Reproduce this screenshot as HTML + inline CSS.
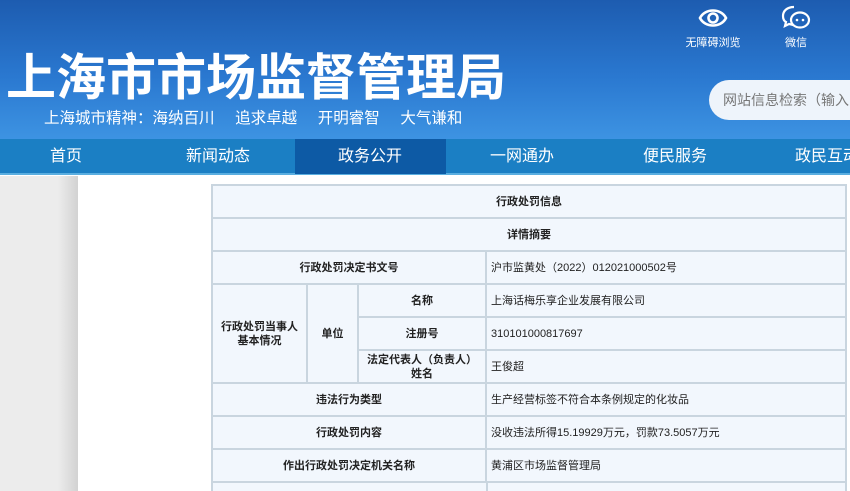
<!DOCTYPE html>
<html><head><meta charset="utf-8"><style>
*{margin:0;padding:0;box-sizing:border-box}
html,body{width:850px;height:491px;overflow:hidden}
body{background:#fff;font-family:"Liberation Sans","Noto Sans CJK SC",sans-serif;position:relative}
.hd{position:absolute;left:0;top:0;width:850px;height:139px;background:linear-gradient(180deg,#1d5cb0 0%,#2a78d0 55%,#3d93e2 100%)}
.title{position:absolute;left:6px;top:44px;font-size:50px;font-weight:bold;color:#fff;font-family:"Noto Sans CJK SC",sans-serif;line-height:60px;white-space:nowrap}
.motto{position:absolute;left:44px;top:108px;font-size:15.5px;color:#fff;line-height:22px;white-space:pre;word-spacing:6px}
.ic{position:absolute;color:#fff;font-size:11px;text-align:center;line-height:14px}
.search{position:absolute;left:709px;top:80px;width:141px;height:40px;border-radius:20px 0 0 20px;background:#eef4fb;color:#777;font-size:14px;line-height:40px;padding-left:14px;white-space:nowrap;overflow:hidden}
.nav{position:absolute;left:0;top:139px;width:850px;height:36px;background:#1b7fc4;border-bottom:2px solid #5aaee0;overflow:hidden}
.nav span{position:absolute;top:0;line-height:36px;color:#fff;font-size:16px;white-space:nowrap}
.act{position:absolute;left:295px;top:139px;width:151px;height:35px;background:#0d5aa5}
.lg{position:absolute;left:0;top:176px;width:78px;height:315px;background:linear-gradient(90deg,#ececec 0,#ececec 58px,#d2d2d2 78px)}
.wrap{position:absolute;left:211px;top:184px;width:636px;height:307px;overflow:hidden}
table{width:636px;border-collapse:collapse;font-size:11px;color:#222}
td{border:2px solid #c9d5df;background:#f2f7fd;height:33px;padding:0;text-align:center;line-height:14px}
td.v{text-align:left;padding-left:4px}
.last{position:absolute;left:0;top:299px;width:636px;height:8px;background:#f2f7fd;border-left:2px solid #c9d5df;border-right:2px solid #c9d5df}
.last i{position:absolute;left:273px;top:0;width:2px;height:8px;background:#c9d5df}
</style></head><body>
<div class="hd"></div>
<div class="title">上海市市场监督管理局</div>
<div class="motto">上海城市精神：海纳百川  追求卓越  开明睿智  大气谦和</div>
<div class="ic" style="left:680px;top:4px;width:66px">
<svg width="32" height="28" viewBox="0 0 32 28"><path d="M3 14C8 4 24 4 29 14C24 24 8 24 3 14Z" fill="none" stroke="#fff" stroke-width="2.6"/><circle cx="16" cy="14" r="4.5" fill="none" stroke="#fff" stroke-width="2.6"/></svg><br>无障碍浏览</div>
<div class="ic" style="left:776px;top:4px;width:40px">
<svg width="32" height="28" viewBox="0 0 32 28"><path d="M14 3C7 3 3 7 3 12c0 3 1 5 3 6l-1 4 4-2c1 0 3 1 4 1" fill="none" stroke="#fff" stroke-width="2.2"/><ellipse cx="20" cy="16" rx="9" ry="7.5" fill="none" stroke="#fff" stroke-width="2.2"/><circle cx="17" cy="16" r="1.3" fill="#fff"/><circle cx="23" cy="16" r="1.3" fill="#fff"/></svg><br>微信</div>
<div class="search">网站信息检索（输入</div>
<div class="nav"></div>
<div class="act"></div>
<div class="nav" style="background:none;border:none">
<span style="left:50px">首页</span><span style="left:186px">新闻动态</span><span style="left:338px">政务公开</span><span style="left:490px">一网通办</span><span style="left:643px">便民服务</span><span style="left:795px">政民互动</span></div>
<div class="lg"></div>
<div class="wrap"><table>
<tr><td colspan="4"><b>行政处罚信息</b></td></tr>
<tr><td colspan="4"><b>详情摘要</b></td></tr>
<tr><td colspan="3" style="width:274px"><b>行政处罚决定书文号</b></td><td class="v">沪市监黄处（2022）012021000502号</td></tr>
<tr><td rowspan="3" style="width:95px"><b>行政处罚当事人<br>基本情况</b></td><td rowspan="3" style="width:51px"><b>单位</b></td><td style="width:128px"><b>名称</b></td><td class="v">上海话梅乐享企业发展有限公司</td></tr>
<tr><td><b>注册号</b></td><td class="v">310101000817697</td></tr>
<tr><td><b>法定代表人（负责人）<br>姓名</b></td><td class="v">王俊超</td></tr>
<tr><td colspan="3"><b>违法行为类型</b></td><td class="v">生产经营标签不符合本条例规定的化妆品</td></tr>
<tr><td colspan="3"><b>行政处罚内容</b></td><td class="v">没收违法所得15.19929万元，罚款73.5057万元</td></tr>
<tr><td colspan="3"><b>作出行政处罚决定机关名称</b></td><td class="v">黄浦区市场监督管理局</td></tr>
</table><div class="last"><i></i></div></div>
</body></html>
